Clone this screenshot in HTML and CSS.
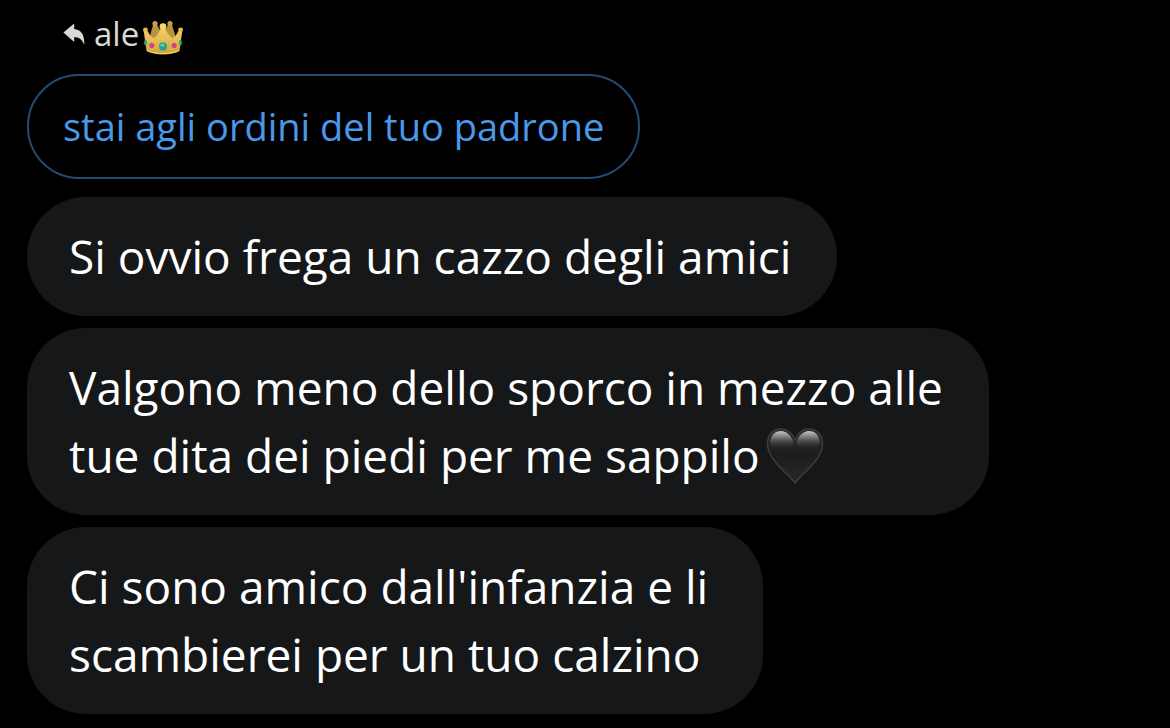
FILE: index.html
```html
<!DOCTYPE html>
<html lang="it">
<head>
  <meta charset="UTF-8">
  <meta name="viewport" content="width=device-width, initial-scale=1">
  <title>Messaggi</title>
  <link rel="stylesheet" href="styles.css">
</head>
<body>
<main class="chat">
  <div class="reply-to">
    <svg class="reply-icon" viewBox="0 0 22 22" aria-hidden="true">
      <path d="M0.4 9.6 11.2 0.6V6C18 6.6 21.6 11.4 21.3 21.6 18.6 16 16 14.2 11.2 14V19Z" fill="currentColor"/>
    </svg>
    <span class="reply-name">ale</span>
    <svg class="crown" viewBox="0 0 40 34" role="img" aria-label="corona">
      <defs>
        <linearGradient id="gold" x1="0" y1="0" x2="0" y2="1">
          <stop offset="0" stop-color="#f0d068"/>
          <stop offset="0.6" stop-color="#e0b850"/>
          <stop offset="1" stop-color="#cf9f38"/>
        </linearGradient>
      </defs>
      <path d="M4 26 10 4H14L20 14 25 4H29L36 26Z" fill="#b8923f"/>
      <circle cx="12" cy="2.6" r="2.6" fill="#c9a04a"/>
      <circle cx="27" cy="2.6" r="2.6" fill="#c9a04a"/>
      <path d="M3.5 30 0.6 9 4 9C6 13 8 16 11 17 15 14 17 10 18 6H22C23 10 25 14 29 17 32 16 34 13 36 9L39.4 9 36.5 30C29 34.6 11 34.6 3.5 30Z" fill="url(#gold)"/>
      <path d="M4 29.5C11 33.4 29 33.4 36 29.5" fill="none" stroke="#f3d97c" stroke-width="1"/>
      <circle cx="20" cy="5.6" r="3.4" fill="#f5d66c"/>
      <circle cx="2.4" cy="8.8" r="2.4" fill="#e2bb52"/>
      <circle cx="37.6" cy="8.8" r="2.4" fill="#e2bb52"/>
      <ellipse cx="20" cy="25.4" rx="4" ry="4.2" fill="#2ea287"/>
      <ellipse cx="19.5" cy="24.2" rx="1.8" ry="1.4" fill="#6fd0b4"/>
      <circle cx="8.8" cy="24.4" r="2.6" fill="#d3457f"/>
      <circle cx="31.2" cy="24.4" r="2.6" fill="#d3457f"/>
      <ellipse cx="2.6" cy="21.6" rx="1.5" ry="2.8" fill="#2ea287"/>
      <ellipse cx="37.4" cy="21.6" rx="1.5" ry="2.8" fill="#2ea287"/>
    </svg>
  </div>
  <p class="quoted">stai agli ordini del tuo padrone</p>
  <p class="bubble">Si ovvio frega un cazzo degli amici</p>
  <p class="bubble">Valgono meno dello sporco in mezzo alle<br>tue dita dei piedi per me sappilo<svg class="heart" viewBox="0 0 58 56" role="img" aria-label="cuore nero">
      <defs>
        <linearGradient id="heart-fill" x1="0" y1="0" x2="0" y2="1">
          <stop offset="0" stop-color="#2b2b2b"/>
          <stop offset="0.5" stop-color="#1d1d1d"/>
          <stop offset="1" stop-color="#2a2828"/>
        </linearGradient>
        <linearGradient id="heart-shine" x1="0" y1="0" x2="0" y2="1">
          <stop offset="0" stop-color="#c4c4c4"/>
          <stop offset="0.35" stop-color="#777"/>
          <stop offset="1" stop-color="#262626" stop-opacity="0"/>
        </linearGradient>
      </defs>
      <path d="M29 55C24 47 3 34 1.5 17 1 6 8 1 15 1 22 1 27 6 29 12 31 6 36 1 43 1 50 1 57 6 56.5 17 55 34 34 47 29 55Z" fill="url(#heart-fill)" stroke="#3f3c3b" stroke-width="1.5"/>
      <path d="M4 17C4 7 9 3 15 3 21 3 26 8 28 16 22 23 10 23 4 17ZM54 17C54 7 49 3 43 3 37 3 32 8 30 16 36 23 48 23 54 17Z" fill="url(#heart-shine)"/>
    </svg></p>
  <p class="bubble short">Ci sono amico dall'infanzia e li<br>scambierei per un tuo calzino</p>
</main>
</body>
</html>
```
FILE: styles.css
```css
*{box-sizing:border-box;}
body{margin:0;background:#000;color:#fff;font-family:"Open Sans","Noto Sans",sans-serif;}
.chat{display:flex;flex-direction:column;align-items:flex-start;gap:12px;padding:10px 27px 12px;}
.reply-to{display:flex;align-items:center;height:48px;padding-left:36px;color:#d9d9d9;}
.reply-icon{width:22px;height:22px;margin-right:9px;}
.reply-name{font-size:33px;line-height:48px;}
.crown{width:40px;height:34px;margin:8px 0 0 4px;}
.quoted{margin:4px 0 6px;padding:24px 34px;border:2px solid #234a70;border-radius:52px;color:#4a99e9;font-size:38px;line-height:53px;}
.bubble{margin:0;padding:25px 46px 26px 42px;border-radius:59px;background:#161719;font-size:46px;line-height:68px;}
.short{padding-right:55px;}
.heart{width:58px;height:56px;margin-left:6px;vertical-align:-11px;}
```
